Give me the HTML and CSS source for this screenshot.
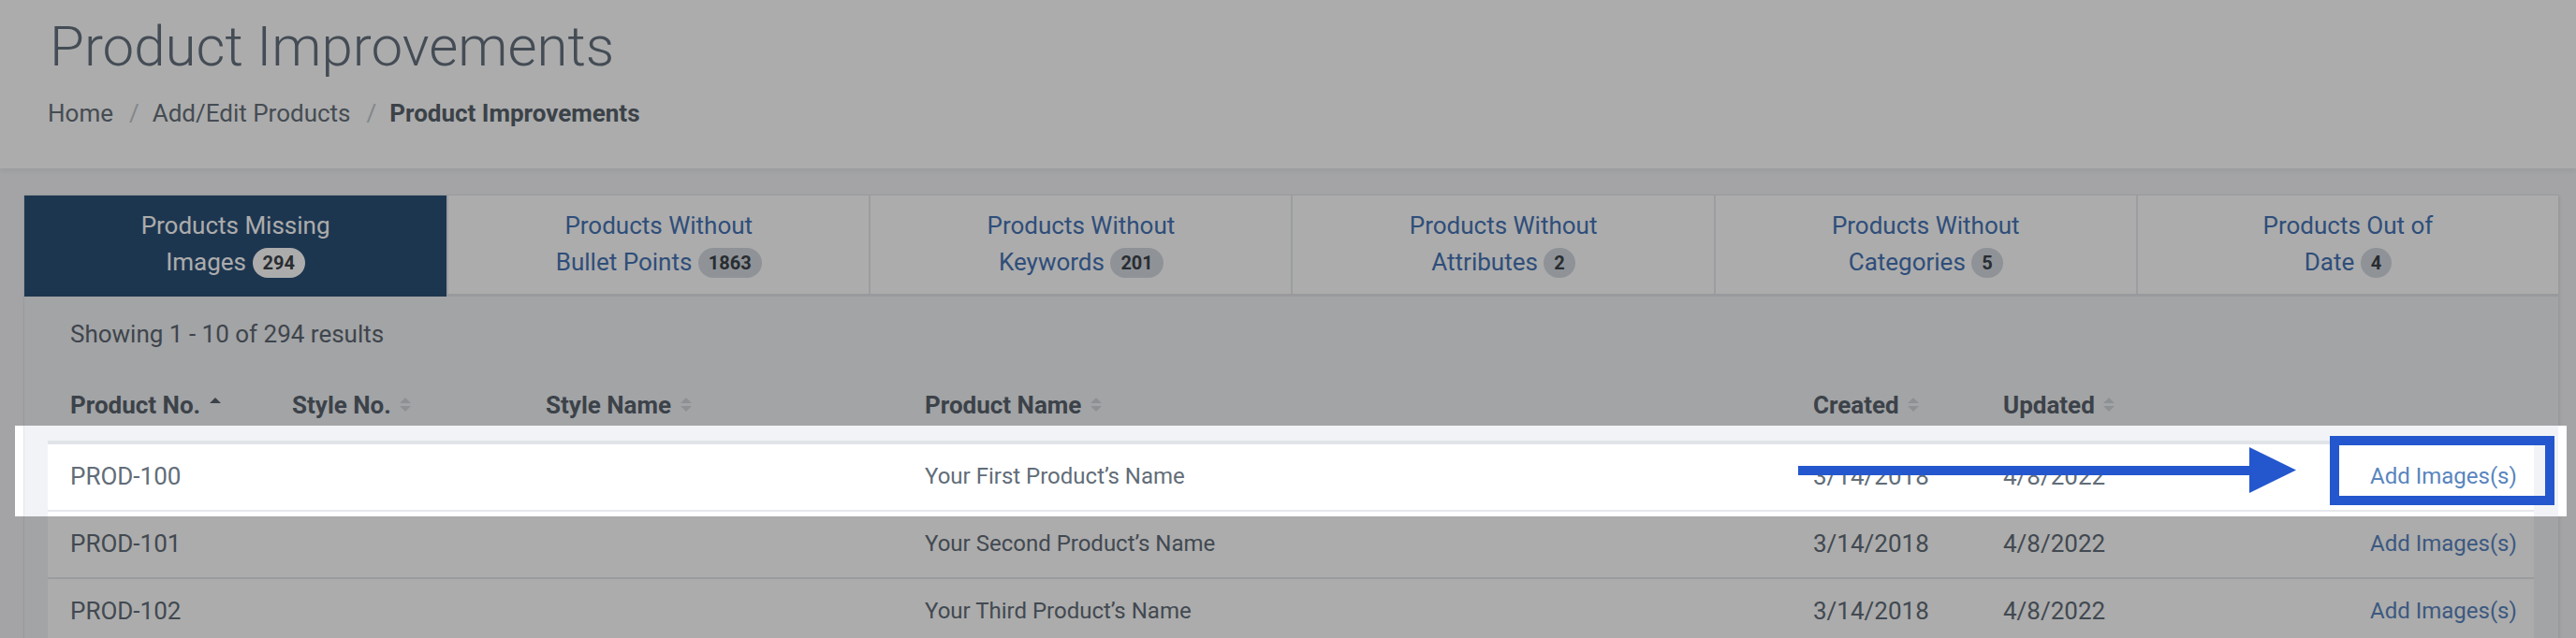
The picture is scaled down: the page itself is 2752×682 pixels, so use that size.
FILE: index.html
```html
<!DOCTYPE html>
<html lang="en">
<head>
<meta charset="utf-8">
<title>Product Improvements</title>
<link rel="stylesheet" href="styles.css">
</head>
<body>
<header class="page-head">
  <h1 class="title">Product Improvements</h1>
  <nav class="crumbs">
    <span class="crumb">Home</span><span class="sep">/</span><span class="crumb">Add/Edit Products</span><span class="sep">/</span><span class="crumb current">Product Improvements</span>
  </nav>
</header>

<main class="page-body">
  <section class="card">
    <div class="tabs">
      <div class="tab active">Products Missing<br>Images <span class="badge">294</span></div>
      <div class="tab">Products Without<br>Bullet Points <span class="badge">1863</span></div>
      <div class="tab">Products Without<br>Keywords <span class="badge">201</span></div>
      <div class="tab">Products Without<br>Attributes <span class="badge">2</span></div>
      <div class="tab">Products Without<br>Categories <span class="badge">5</span></div>
      <div class="tab">Products Out of<br>Date <span class="badge">4</span></div>
    </div>
    <div class="card-body">
      <p class="showing">Showing 1 - 10 of 294 results</p>
      <table class="grid">
        <colgroup>
          <col class="c1"><col class="c2"><col class="c3"><col class="c4"><col class="c5"><col class="c6"><col class="c7">
        </colgroup>
        <thead>
          <tr>
            <th>Product No. <svg class="sort" viewBox="0 0 14 20"><polygon class="on" points="1,8 7,2 13,8"/></svg></th>
            <th>Style No. <svg class="sort" viewBox="0 0 14 20"><polygon points="1,8 7,2 13,8"/><polygon points="1,11 13,11 7,17"/></svg></th>
            <th>Style Name <svg class="sort" viewBox="0 0 14 20"><polygon points="1,8 7,2 13,8"/><polygon points="1,11 13,11 7,17"/></svg></th>
            <th>Product Name <svg class="sort" viewBox="0 0 14 20"><polygon points="1,8 7,2 13,8"/><polygon points="1,11 13,11 7,17"/></svg></th>
            <th>Created <svg class="sort" viewBox="0 0 14 20"><polygon points="1,8 7,2 13,8"/><polygon points="1,11 13,11 7,17"/></svg></th>
            <th>Updated <svg class="sort" viewBox="0 0 14 20"><polygon points="1,8 7,2 13,8"/><polygon points="1,11 13,11 7,17"/></svg></th>
            <th></th>
          </tr>
        </thead>
        <tbody>
          <tr><td>PROD-100</td><td></td><td></td><td class="name">Your First Product’s Name</td><td>3/14/2018</td><td>4/8/2022</td><td class="act"><a href="#">Add Images(s)</a></td></tr>
          <tr><td>PROD-101</td><td></td><td></td><td class="name">Your Second Product’s Name</td><td>3/14/2018</td><td>4/8/2022</td><td class="act"><a href="#">Add Images(s)</a></td></tr>
          <tr><td>PROD-102</td><td></td><td></td><td class="name">Your Third Product’s Name</td><td>3/14/2018</td><td>4/8/2022</td><td class="act"><a href="#">Add Images(s)</a></td></tr>
        </tbody>
      </table>
    </div>
  </section>
</main>

<div class="spotlight"></div>
<div class="callout"></div>
<svg class="arrow" viewBox="0 0 532 49"><rect x="0" y="20" width="484" height="10"/><polygon points="482,0 532,24.5 482,49"/></svg>
</body>
</html>
```

FILE: styles.css
```css
* { box-sizing: border-box; }

html, body {
  margin: 0;
  padding: 0;
}

body {
  background: #f3f4f7;
  font-family: Roboto, "Liberation Sans", Arial, sans-serif;
  color: #626d78;
  overflow: hidden;
}

.page-head {
  background: #ffffff;
  height: 180px;
  padding: 14px 0 0 53px;
  box-shadow: 0 3px 6px rgba(0, 0, 0, 0.06);
  position: relative;
  z-index: 1;
}

.title {
  margin: 0;
  font-weight: 300;
  font-size: 60px;
  line-height: 72px;
  color: #65717f;
}

.crumbs {
  margin-top: 16px;
  margin-left: -2px;
  font-size: 26px;
  line-height: 39px;
  color: #67717b;
}

.sep {
  color: #c3c9cf;
  padding: 0 14px 0 17px;
}

.crumb.current {
  font-weight: 700;
  color: #58626c;
}

.page-body {
  padding: 28px 18px 0 25px;
}

.card {
  background: #f1f3f6;
  border: 1px solid #e3e6ea;
  box-shadow: 1px 1px 3px rgba(0, 0, 0, 0.08);
}

.tabs {
  display: grid;
  grid-template-columns: repeat(6, 1fr);
  background: #ffffff;
  border-bottom: 3px solid #e2e5e9;
}

.tab {
  text-align: center;
  font-size: 26px;
  line-height: 39px;
  padding: 13px 0 14px;
  color: #4674b5;
  border-left: 2px solid #e6e9ee;
}

.tab:first-child { border-left: 0; }

.tab.active {
  background: #2b5077;
  color: #ffffff;
  margin-bottom: -3px;
  padding-bottom: 17px;
}

.badge {
  display: inline-block;
  font-size: 20px;
  font-weight: 700;
  line-height: 20px;
  padding: 6px 11px;
  border-radius: 16px;
  background: #d4dae1;
  color: #3e4349;
  vertical-align: 1px;
}

.tab.active .badge {
  background: #ffffff;
  color: #3e4349;
}

.card-body {
  padding: 0 26px 40px 25px;
}

.showing {
  margin: 21px 0 0 24px;
  font-size: 26px;
  line-height: 39px;
  color: #5e6771;
}

.grid {
  width: 100%;
  margin-top: 22px;
  table-layout: fixed;
  border-collapse: collapse;
  font-size: 26px;
  line-height: 39px;
}

.c1 { width: 237px; }
.c2 { width: 271px; }
.c3 { width: 405px; }
.c4 { width: 949px; }
.c5 { width: 203px; }
.c6 { width: 392px; }
.c7 { width: 199px; }

.grid th {
  text-align: left;
  font-weight: 700;
  color: #5a636d;
  padding: 15px 24px 18px;
  border-bottom: 4px solid #e0e4e8;
  white-space: nowrap;
}

.sort {
  width: 14px;
  height: 20px;
  vertical-align: -1px;
  margin-left: 2px;
}

.sort polygon { fill: #d3d7dc; }
.sort polygon.on { fill: #5a636d; }

.grid td {
  background: #ffffff;
  padding: 15px 24px 16px;
  border-bottom: 2px solid #e5e8ec;
  white-space: nowrap;
}

.grid td.name {
  font-size: 24px;
}

.grid td.act {
  text-align: left;
  font-size: 24px;
}

.grid a {
  color: #5985be;
  text-decoration: none;
}

/* modal-style dimming with a clear window over the first row */
.spotlight {
  position: absolute;
  left: 16px;
  top: 455px;
  width: 2726px;
  height: 97px;
  z-index: 5;
  box-shadow: 0 0 0 4000px rgba(0, 0, 0, 0.325);
  background:
    linear-gradient(to right, #ffffff 0, #ffffff 9px, transparent 9px, transparent 2717px, #ffffff 2717px);
}

.callout {
  position: absolute;
  left: 2489px;
  top: 466px;
  width: 240px;
  height: 74px;
  border: 10px solid #2457ce;
  z-index: 6;
}

.arrow {
  position: absolute;
  left: 1921px;
  top: 478px;
  width: 532px;
  height: 49px;
  z-index: 6;
  fill: #2457ce;
}
```
